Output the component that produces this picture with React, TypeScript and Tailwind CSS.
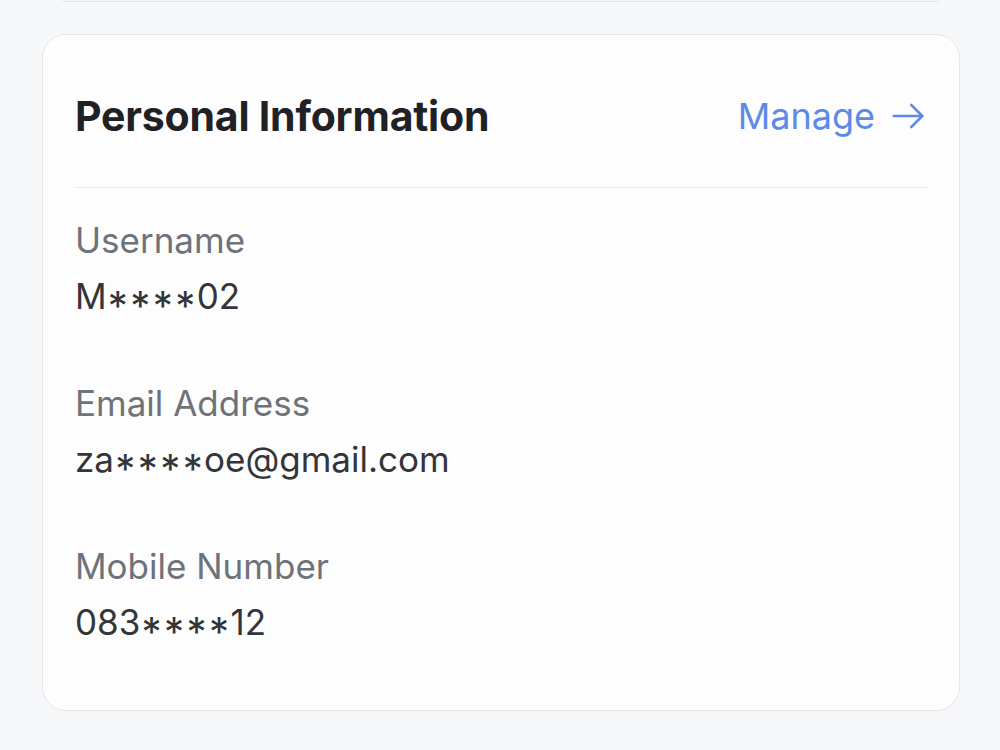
const fields = [
  { label: 'Username', value: 'M****02' },
  { label: 'Email Address', value: 'za****oe@gmail.com' },
  { label: 'Mobile Number', value: '083****12' },
];

const ArrowRight = () => (
  <svg width="38" height="38" viewBox="0 0 24 24" fill="none" stroke="currentColor" strokeWidth="1.6" strokeLinecap="round" strokeLinejoin="round">
    <path d="M3 12h18" />
    <path d="M14 5l7 7-7 7" />
  </svg>
);

// masked chars render as centred asterisks, like the native font
const Masked = ({ text }: { text: string }) => (
  <>
    {text.split('').map((ch, i) =>
      ch === '*' ? (
        <span key={i} className="inline-block w-[22.5px] translate-y-[11px] text-center text-[40px] leading-[0]">
          *
        </span>
      ) : (
        <span key={i}>{ch}</span>
      )
    )}
  </>
);

const App = () => {
  return (
    <div className="min-h-[750px] w-[1000px] bg-[#f6f7f9] font-['Inter','Noto_Sans',sans-serif]">
      <div className="ml-[62px] w-[878px] h-[2px] rounded-b-[24px] border-b border-[#e3e5e8]" />

      <div className="ml-[42px] w-[918px] mt-[32px] rounded-[24px] border border-[#e4e6ea] bg-[#fdfdfe] px-[32px] pb-[66px]">
        <div className="flex items-center justify-between pt-[55px] pb-[45px] border-b border-[#e5e7eb]">
          <h1 className="text-[41px] leading-[52px] font-bold tracking-[-0.2px] text-[#1f2124]">
            Personal Information
          </h1>
          <button className="flex items-center gap-[14px] text-[36px] leading-[52px] text-[#5b8be6]">
            <span>Manage</span>
            <ArrowRight />
          </button>
        </div>

        <div className="flex flex-col gap-[63px] pt-[30px]">
          {fields.map((field) => (
            <div key={field.label} className="flex flex-col gap-[12px]">
              <p className="text-[35px] leading-[44px] text-[#6e7279]">{field.label}</p>
              <p className="text-[35px] leading-[44px] text-[#333538]">
                <Masked text={field.value} />
              </p>
            </div>
          ))}
        </div>
      </div>
    </div>
  );
};

export default App;
